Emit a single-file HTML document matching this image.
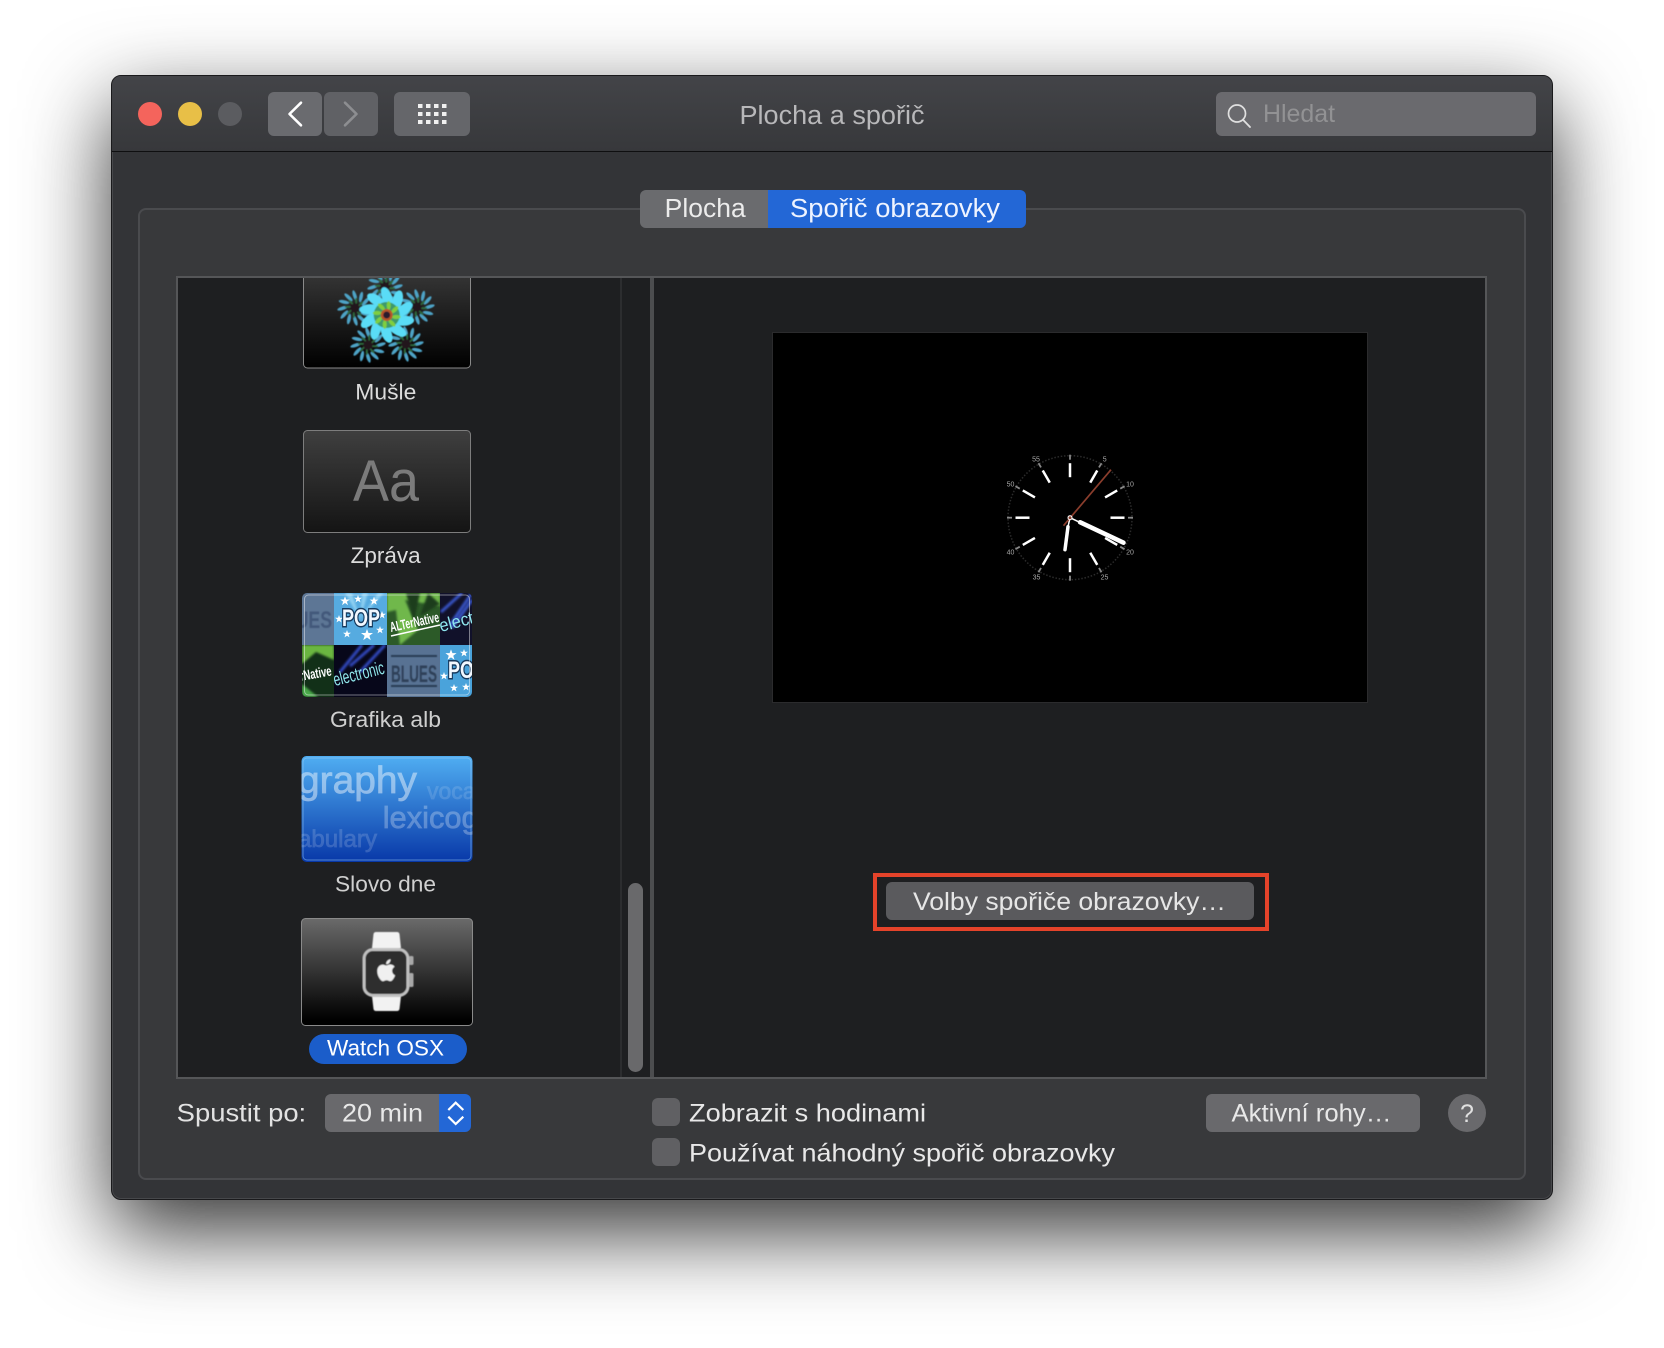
<!DOCTYPE html>
<html lang="cs"><head><meta charset="utf-8"><title>Plocha a spořič</title>
<style>
html,body{margin:0;padding:0;width:1664px;height:1348px;background:#fff;overflow:hidden;font-family:"Liberation Sans",sans-serif}
div{position:absolute;box-sizing:border-box}
svg{position:absolute;left:0;top:0}
text{font-family:"Liberation Sans",sans-serif}
</style></head><body>
<div style="left:111px;top:75px;width:1442px;height:1125px;border-radius:10px;background:#333437;border:1px solid #1a1a1c;box-shadow:0 32px 85px rgba(0,0,0,.8),inset 0 0 0 1px rgba(255,255,255,.1)"></div>
<div style="left:112px;top:76px;width:1440px;height:76px;border-radius:9px 9px 0 0;background:linear-gradient(#434448,#37383b);border-bottom:1px solid #0f0f10"></div>
<div style="left:138px;top:208px;width:1388px;height:972px;border-radius:8px;background:#38393b;border:2px solid #4a4b4e"></div>
<div style="left:176px;top:276px;width:1311px;height:803px;background:#1e1f21;border:2px solid #555658"></div>
<div style="left:620px;top:278px;width:2px;height:799px;background:#2c2d2f"></div>
<div style="left:650px;top:278px;width:4px;height:799px;background:#4c4d4f"></div>
<div style="left:628px;top:883px;width:15px;height:189px;border-radius:8px;background:#69696b"></div>
<div style="left:772px;top:332px;width:596px;height:371px;background:#000;border:1px solid #2b2b2d"></div>
<div style="left:873px;top:873px;width:396px;height:58px;border:4px solid #e5432a"></div>
<div style="left:886px;top:882px;width:368px;height:38px;border-radius:6px;background:#5a5a5d"></div>
<div style="left:268px;top:92px;width:54px;height:44px;border-radius:6px;background:#6a6b6f"></div>
<div style="left:324px;top:92px;width:54px;height:44px;border-radius:6px;background:#606165"></div>
<div style="left:394px;top:92px;width:76px;height:44px;border-radius:6px;background:#65666a"></div>
<div style="left:1216px;top:92px;width:320px;height:44px;border-radius:6px;background:#6a6a6e"></div>
<div style="left:640px;top:190px;width:128px;height:38px;border-radius:6px 0 0 6px;background:#6a6b6e"></div>
<div style="left:768px;top:190px;width:258px;height:38px;border-radius:0 6px 6px 0;background:#2367d6"></div>
<div style="left:325px;top:1094px;width:114px;height:38px;border-radius:6px 0 0 6px;background:#69696c"></div>
<div style="left:439px;top:1094px;width:32px;height:38px;border-radius:0 6px 6px 0;background:#2367d6"></div>
<div style="left:652px;top:1098px;width:28px;height:28px;border-radius:6px;background:#606063"></div>
<div style="left:652px;top:1138px;width:28px;height:28px;border-radius:6px;background:#606063"></div>
<div style="left:1206px;top:1094px;width:214px;height:38px;border-radius:6px;background:#69696c"></div>
<div style="left:1448px;top:1094px;width:38px;height:38px;border-radius:50%;background:#69696c"></div>
<div style="left:309px;top:1034px;width:158px;height:30px;border-radius:15px;background:#1b5dca"></div>

<svg width="1664" height="1348" viewBox="0 0 1664 1348" xmlns="http://www.w3.org/2000/svg">
<defs>
<filter id="b1" x="-20%" y="-20%" width="140%" height="140%"><feGaussianBlur stdDeviation="1"/></filter>
<filter id="b2" x="-20%" y="-20%" width="140%" height="140%"><feGaussianBlur stdDeviation=".45"/></filter>
<linearGradient id="gm" x1="0" y1="0" x2="0" y2="1"><stop offset="0" stop-color="#3c3c3c"/><stop offset="1" stop-color="#000"/></linearGradient>
<linearGradient id="gz" x1="0" y1="0" x2="0" y2="1"><stop offset="0" stop-color="#3f3f3f"/><stop offset="1" stop-color="#141414"/></linearGradient>
<linearGradient id="gs" x1="0" y1="0" x2="0" y2="1"><stop offset="0" stop-color="#50aef2"/><stop offset="1" stop-color="#0838a8"/></linearGradient>
<linearGradient id="gw" x1="0" y1="0" x2="0" y2="1"><stop offset="0" stop-color="#6a6a6a"/><stop offset=".95" stop-color="#000"/></linearGradient>
<clipPath id="c1"><rect x="301" y="278" width="172" height="93"/></clipPath>
<clipPath id="c3"><rect x="302" y="593" width="170" height="104" rx="5"/></clipPath>
<clipPath id="c4"><rect x="301.500" y="756" width="171" height="106" rx="5"/></clipPath>
<clipPath id="t1"><rect x="302" y="593" width="32" height="52"/></clipPath>
<clipPath id="t2"><rect x="334" y="593" width="53" height="52"/></clipPath>
<clipPath id="t3"><rect x="387" y="593" width="53" height="52"/></clipPath>
<clipPath id="t4"><rect x="440" y="593" width="32" height="52"/></clipPath>
<clipPath id="t5"><rect x="302" y="645" width="32" height="52"/></clipPath>
<clipPath id="t6"><rect x="334" y="645" width="53" height="52"/></clipPath>
<clipPath id="t7"><rect x="387" y="645" width="53" height="52"/></clipPath>
<clipPath id="t8"><rect x="440" y="645" width="32" height="52"/></clipPath>
<ellipse id="pa" cx="3" cy="-10" rx="1.500" ry="4.500" fill="#4da3c6" transform="rotate(12)"/>
<ellipse id="pb" cx="1" cy="-6" rx=".9" ry="2.600" fill="#2f6a3e"/>
<g id="pin">
<circle r="4.500" fill="#20161c"/>
<use href="#pa"/><use href="#pa" transform="rotate(30)"/><use href="#pa" transform="rotate(60)"/><use href="#pa" transform="rotate(90)"/><use href="#pa" transform="rotate(120)"/><use href="#pa" transform="rotate(150)"/><use href="#pa" transform="rotate(180)"/><use href="#pa" transform="rotate(210)"/><use href="#pa" transform="rotate(240)"/><use href="#pa" transform="rotate(270)"/><use href="#pa" transform="rotate(300)"/><use href="#pa" transform="rotate(330)"/>
<use href="#pb"/><use href="#pb" transform="rotate(45)"/><use href="#pb" transform="rotate(90)"/><use href="#pb" transform="rotate(135)"/><use href="#pb" transform="rotate(180)"/><use href="#pb" transform="rotate(225)"/><use href="#pb" transform="rotate(270)"/><use href="#pb" transform="rotate(315)"/>
</g>
<ellipse id="pc" cx="7" cy="-17" rx="5" ry="10" fill="#5adcf6" transform="rotate(14)"/>
<ellipse id="pd" cx="2" cy="-9.500" rx="2" ry="4.500" fill="#7fcf3f"/>
<polygon id="st" points="0,-4 1,-1.300 4,-1.300 1.600,.5 2.500,3.400 0,1.700 -2.500,3.400 -1.600,.5 -4,-1.300 -1,-1.300" fill="#fff"/>
<g id="tk"><line x1="0" y1="-40.500" x2="0" y2="-54.500" stroke="#fff" stroke-width="2.500"/><line x1="0" y1="-58" x2="0" y2="-63" stroke="#888" stroke-width="1.800"/></g>
</defs>

<!-- traffic lights -->
<circle cx="150" cy="114" r="12" fill="#f4645c"/><circle cx="190" cy="114" r="12" fill="#e8bf47"/><circle cx="230" cy="114" r="12" fill="#5b5c60"/>
<!-- nav -->
<path d="M301 102.700 289.500 114 301 125.300" fill="none" stroke="#fff" stroke-width="2.600" stroke-linecap="round" stroke-linejoin="round"/>
<path d="M345 102.700 356.500 114 345 125.300" fill="none" stroke="#8d8e91" stroke-width="2.600" stroke-linecap="round" stroke-linejoin="round"/>
<g fill="#f0f0f0"><rect x="418" y="104" width="4.500" height="4"/><rect x="426" y="104" width="4.500" height="4"/><rect x="434" y="104" width="4.500" height="4"/><rect x="442" y="104" width="4.500" height="4"/><rect x="418" y="112" width="4.500" height="4"/><rect x="426" y="112" width="4.500" height="4"/><rect x="434" y="112" width="4.500" height="4"/><rect x="442" y="112" width="4.500" height="4"/><rect x="418" y="120" width="4.500" height="4"/><rect x="426" y="120" width="4.500" height="4"/><rect x="434" y="120" width="4.500" height="4"/><rect x="442" y="120" width="4.500" height="4"/></g>
<!-- search -->
<circle cx="1237" cy="113.500" r="8.500" fill="none" stroke="#e0e0e0" stroke-width="1.700"/><line x1="1243" y1="119.700" x2="1250" y2="127" stroke="#e0e0e0" stroke-width="1.800" stroke-linecap="round"/>

<!-- text chrome -->
<text x="739.500" y="124" font-size="25.500" fill="#b8b8ba" textLength="185" lengthAdjust="spacingAndGlyphs">Plocha a spořič</text>
<text x="1263" y="122" font-size="25" fill="#929294" textLength="72" lengthAdjust="spacingAndGlyphs">Hledat</text>
<text x="664.700" y="217" font-size="25.500" fill="#ececec" textLength="81" lengthAdjust="spacingAndGlyphs">Plocha</text>
<text x="790" y="217" font-size="25.500" fill="#eef3ff" textLength="210" lengthAdjust="spacingAndGlyphs">Spořič obrazovky</text>

<!-- Mušle -->
<g clip-path="url(#c1)">
<rect x="303.500" y="262" width="167" height="106" rx="4" fill="url(#gm)" stroke="#8a8a8a"/>
<g filter="url(#b2)">
<use href="#pin" transform="translate(385,287) scale(1.200)"/>
<use href="#pin" transform="translate(355,308) scale(1.200)"/>
<use href="#pin" transform="translate(417,307) scale(1.200)"/>
<use href="#pin" transform="translate(368,345) scale(1.200)"/>
<use href="#pin" transform="translate(406,344) scale(1.200)"/>
<g transform="translate(386.700,315)">
<use href="#pc"/><use href="#pc" transform="rotate(36)"/><use href="#pc" transform="rotate(72)"/><use href="#pc" transform="rotate(108)"/><use href="#pc" transform="rotate(144)"/><use href="#pc" transform="rotate(180)"/><use href="#pc" transform="rotate(216)"/><use href="#pc" transform="rotate(252)"/><use href="#pc" transform="rotate(288)"/><use href="#pc" transform="rotate(324)"/>
<circle r="13" fill="#3e9a6a"/>
<use href="#pd"/><use href="#pd" transform="rotate(45)"/><use href="#pd" transform="rotate(90)"/><use href="#pd" transform="rotate(135)"/><use href="#pd" transform="rotate(180)"/><use href="#pd" transform="rotate(225)"/><use href="#pd" transform="rotate(270)"/><use href="#pd" transform="rotate(315)"/>
<circle r="6" fill="#b8542c"/><circle r="3.500" fill="#2b1a2e"/>
</g>
</g>
</g>
<text x="355.300" y="399.300" font-size="22" fill="#dcdcdc" textLength="61" lengthAdjust="spacingAndGlyphs">Mušle</text>

<!-- Zpráva -->
<rect x="303.500" y="430.500" width="167" height="102" rx="4" fill="url(#gz)" stroke="#7d7d7d"/>
<text x="353" y="501" font-size="58" fill="#7b7b7b" textLength="66" lengthAdjust="spacingAndGlyphs">Aa</text>
<text x="350.700" y="563" font-size="22" fill="#dcdcdc" textLength="70" lengthAdjust="spacingAndGlyphs">Zpráva</text>

<!-- Grafika alb -->
<g clip-path="url(#c3)">
<rect x="302" y="593" width="32" height="52" fill="#5d7695"/>
<g clip-path="url(#t1)"><text x="272" y="628" font-size="24" font-weight="bold" fill="#43597a" textLength="60" lengthAdjust="spacingAndGlyphs" filter="url(#b2)">BLUES</text></g>
<rect x="334" y="593" width="53" height="52" fill="#56abe0"/>
<g clip-path="url(#t2)">
<path d="M360 619 345 593H352ZM360 619 362 593H368ZM360 619 378 593H384Z" fill="#8fd0f2" filter="url(#b1)"/>
<use href="#st" transform="translate(345,601) scale(1.200)"/><use href="#st" transform="translate(358,599)"/><use href="#st" transform="translate(374,601) scale(1.100)"/><use href="#st" transform="translate(339,619)"/><use href="#st" transform="translate(347,634)"/><use href="#st" transform="translate(367,635) scale(1.500)"/><use href="#st" transform="translate(382,615)"/><use href="#st" transform="translate(380,630)"/>
<text x="342" y="626" font-size="24" font-weight="bold" fill="#f2f8ff" stroke="#16395c" stroke-width="3" paint-order="stroke" textLength="38" lengthAdjust="spacingAndGlyphs">POP</text>
</g>
<rect x="387" y="593" width="53" height="52" fill="#2c5a28"/>
<g clip-path="url(#t3)">
<path d="M387 593H440V606L405 600 418 630 400 645 396 610 387 612Z" fill="#6fb84b" filter="url(#b1)"/>
<path d="M406 593 414 622 420 593ZM428 593 420 616 440 604Z" fill="#1b3d1c" filter="url(#b1)"/>
<text transform="translate(391,632) rotate(-12)" font-size="14" font-weight="bold" fill="#fff" textLength="50" lengthAdjust="spacingAndGlyphs">ALTerNative</text>
<line x1="391" y1="636" x2="440" y2="625" stroke="#fff" stroke-width="1.500"/>
</g>
<rect x="440" y="593" width="32" height="52" fill="#11112a"/>
<g clip-path="url(#t4)">
<path d="M472 593 450 625M462 593 441 612M472 600 452 628" stroke="#3954c8" stroke-width="3" filter="url(#b1)"/>
<text transform="translate(441,632) rotate(-15)" font-size="18" fill="#8fe6ee" textLength="70" lengthAdjust="spacingAndGlyphs">electronic</text>
</g>
<rect x="302" y="645" width="32" height="52" fill="#123018"/>
<g clip-path="url(#t5)">
<path d="M302 645H334V660L316 652 302 664Z" fill="#6bb640" filter="url(#b1)"/><path d="M302 684 318 697H302Z" fill="#4aa84a" filter="url(#b1)"/>
<text transform="translate(283,684) rotate(-10)" font-size="14" font-weight="bold" fill="#fff" textLength="50" lengthAdjust="spacingAndGlyphs">AlterNative</text>
</g>
<rect x="334" y="645" width="53" height="52" fill="#07071a"/>
<g clip-path="url(#t6)">
<path d="M362 645 340 672M374 645 350 666M385 645 360 672" stroke="#3148c0" stroke-width="3" filter="url(#b1)"/>
<text transform="translate(335,686) rotate(-14)" font-size="18.500" fill="#8fe6ea" textLength="52" lengthAdjust="spacingAndGlyphs">electronic</text>
</g>
<rect x="387" y="645" width="53" height="52" fill="#587293"/>
<g clip-path="url(#t7)" filter="url(#b2)">
<rect x="391" y="655" width="46" height="2" fill="#2c3e55"/><rect x="391" y="685" width="46" height="2" fill="#2c3e55"/>
<text x="391" y="682" font-size="24" font-weight="bold" fill="#2d4159" textLength="46" lengthAdjust="spacingAndGlyphs">BLUES</text>
</g>
<rect x="440" y="645" width="32" height="52" fill="#4aa3db"/>
<g clip-path="url(#t8)">
<use href="#st" transform="translate(451,655) scale(1.400)"/><use href="#st" transform="translate(464,653)"/><use href="#st" transform="translate(444,676)"/><use href="#st" transform="translate(454,688)"/><use href="#st" transform="translate(466,687)"/>
<text x="448" y="678" font-size="24" font-weight="bold" fill="#f2f8ff" stroke="#16395c" stroke-width="3" paint-order="stroke" textLength="38" lengthAdjust="spacingAndGlyphs">POP</text>
</g>
</g>
<rect x="304.500" y="595" width="165" height="100" rx="4" fill="none" stroke="#fff" stroke-opacity=".45"/>
<text x="330" y="727" font-size="22" fill="#cfcfcf" textLength="111" lengthAdjust="spacingAndGlyphs">Grafika alb</text>

<!-- Slovo dne -->
<g clip-path="url(#c4)">
<rect x="301" y="756" width="172" height="106" fill="url(#gs)"/>
<g fill="#fff" stroke="#fff" stroke-width=".7">
<text opacity=".45" x="298" y="793" font-size="38" textLength="119" lengthAdjust="spacingAndGlyphs">graphy</text>
<text opacity=".13" x="427" y="799" font-size="23">voca</text>
<text opacity=".27" x="382.700" y="828" font-size="31" textLength="96" lengthAdjust="spacingAndGlyphs">lexicog</text>
<text opacity=".16" x="298" y="847" font-size="24" textLength="79" lengthAdjust="spacingAndGlyphs">abulary</text>
</g>
</g>
<rect x="303" y="758" width="168" height="102" rx="4" fill="none" stroke="#9ccff5" stroke-opacity=".5"/>
<text x="335" y="891.700" font-size="22" fill="#d0d0d0" textLength="101" lengthAdjust="spacingAndGlyphs">Slovo dne</text>

<!-- Watch -->
<rect x="301.500" y="918.500" width="171" height="107" rx="4" fill="url(#gw)" stroke="#8a8a8a"/>
<g filter="url(#b2)">
<path d="M372 948 373.500 934Q374 932 376 932H397Q399 932 399.500 934L401 948ZM372 996 373.500 1009Q374 1011 376 1011H397Q399 1011 399.500 1009L401 996Z" fill="#f2f2f2"/>
<rect x="364" y="949.500" width="44" height="46" rx="9" fill="#2d2d2d" stroke="#c0c0c0" stroke-width="3"/>
<rect x="409" y="956" width="4.500" height="9" rx="1.500" fill="#a8a8a8"/><rect x="409" y="973" width="4.500" height="14" rx="1.500" fill="#a8a8a8"/>
<path transform="translate(373,957) scale(1.100)" fill="#f0f0f0" d="M18.710 19.500c-.83 1.240-1.710 2.450-3.050 2.470-1.340.03-1.770-.79-3.290-.79-1.530 0-2 .77-3.270.82-1.310.05-2.300-1.320-3.140-2.530C4.250 17 2.940 12.450 4.700 9.390c.87-1.520 2.430-2.480 4.120-2.510 1.280-.02 2.500.87 3.290.87.78 0 2.260-1.070 3.810-.91.65.03 2.470.26 3.640 1.980-.09.06-2.170 1.280-2.150 3.810.03 3.020 2.650 4.030 2.680 4.040-.03.07-.42 1.440-1.380 2.830M13 3.500c.73-.83 1.940-1.460 2.940-1.500.13 1.170-.34 2.350-1.040 3.190-.69.85-1.830 1.510-2.950 1.420-.15-1.150.41-2.350 1.050-3.110z"/>
</g>
<text x="327" y="1055.700" font-size="22" fill="#fff" textLength="117" lengthAdjust="spacingAndGlyphs">Watch OSX</text>

<!-- clock -->
<g transform="translate(1070,517.700)">
<circle r="62" fill="none" stroke="#2b2b2b" stroke-width="1.500" stroke-dasharray="1.500 1.750"/>
<use href="#tk"/><use href="#tk" transform="rotate(30)"/><use href="#tk" transform="rotate(60)"/><use href="#tk" transform="rotate(90)"/><use href="#tk" transform="rotate(120)"/><use href="#tk" transform="rotate(150)"/><use href="#tk" transform="rotate(180)"/><use href="#tk" transform="rotate(210)"/><use href="#tk" transform="rotate(240)"/><use href="#tk" transform="rotate(270)"/><use href="#tk" transform="rotate(300)"/><use href="#tk" transform="rotate(330)"/>
<g font-size="7" fill="#a8a8a8" text-anchor="middle">
<text x="34.700" y="-56">5</text><text x="60" y="-31">10</text><text x="60" y="37">20</text><text x="34.500" y="62">25</text><text x="-33.500" y="62">35</text><text x="-59.500" y="37">40</text><text x="-59.500" y="-31">50</text><text x="-34" y="-56">55</text>
</g>
<line x1="0" y1="0" x2="10" y2="4.700" stroke="#fff" stroke-width="1.500"/>
<line x1="10" y1="4.500" x2="53.500" y2="25" stroke="#fff" stroke-width="4.500" stroke-linecap="round"/>
<line x1="0" y1="0" x2="-2" y2="9" stroke="#fff" stroke-width="1.500"/>
<line x1="-2" y1="9" x2="-5" y2="32" stroke="#fff" stroke-width="3.500" stroke-linecap="round"/>
<line x1="-6.500" y1="8" x2="41" y2="-48" stroke="#8a3d2c" stroke-width="1.700"/>
<circle r="2" fill="#8a3d2c" stroke="#fff" stroke-width="1"/>
</g>

<text x="913" y="910" font-size="25" fill="#e6e6e6" textLength="313" lengthAdjust="spacingAndGlyphs">Volby spořiče obrazovky…</text>

<!-- bottom -->
<text x="176.700" y="1121.700" font-size="25" fill="#e2e2e2" textLength="129.500" lengthAdjust="spacingAndGlyphs">Spustit po:</text>
<text x="342" y="1121.700" font-size="25" fill="#e8e8e8" textLength="81" lengthAdjust="spacingAndGlyphs">20 min</text>
<path d="M448.300 1110 455.700 1102.700 463.300 1110M448.300 1116.700 455.700 1124 463.300 1116.700" fill="none" stroke="#fff" stroke-width="2.200"/>
<text x="689" y="1121.700" font-size="25" fill="#e8e8e8" textLength="237" lengthAdjust="spacingAndGlyphs">Zobrazit s hodinami</text>
<text x="689" y="1161.700" font-size="25" fill="#e8e8e8" textLength="426" lengthAdjust="spacingAndGlyphs">Používat náhodný spořič obrazovky</text>
<text x="1231.500" y="1121.700" font-size="25" fill="#e8e8e8" textLength="160" lengthAdjust="spacingAndGlyphs">Aktivní rohy…</text>
<text x="1467" y="1122" font-size="25" fill="#e0e0e0" text-anchor="middle">?</text>
</svg>
</body></html>
